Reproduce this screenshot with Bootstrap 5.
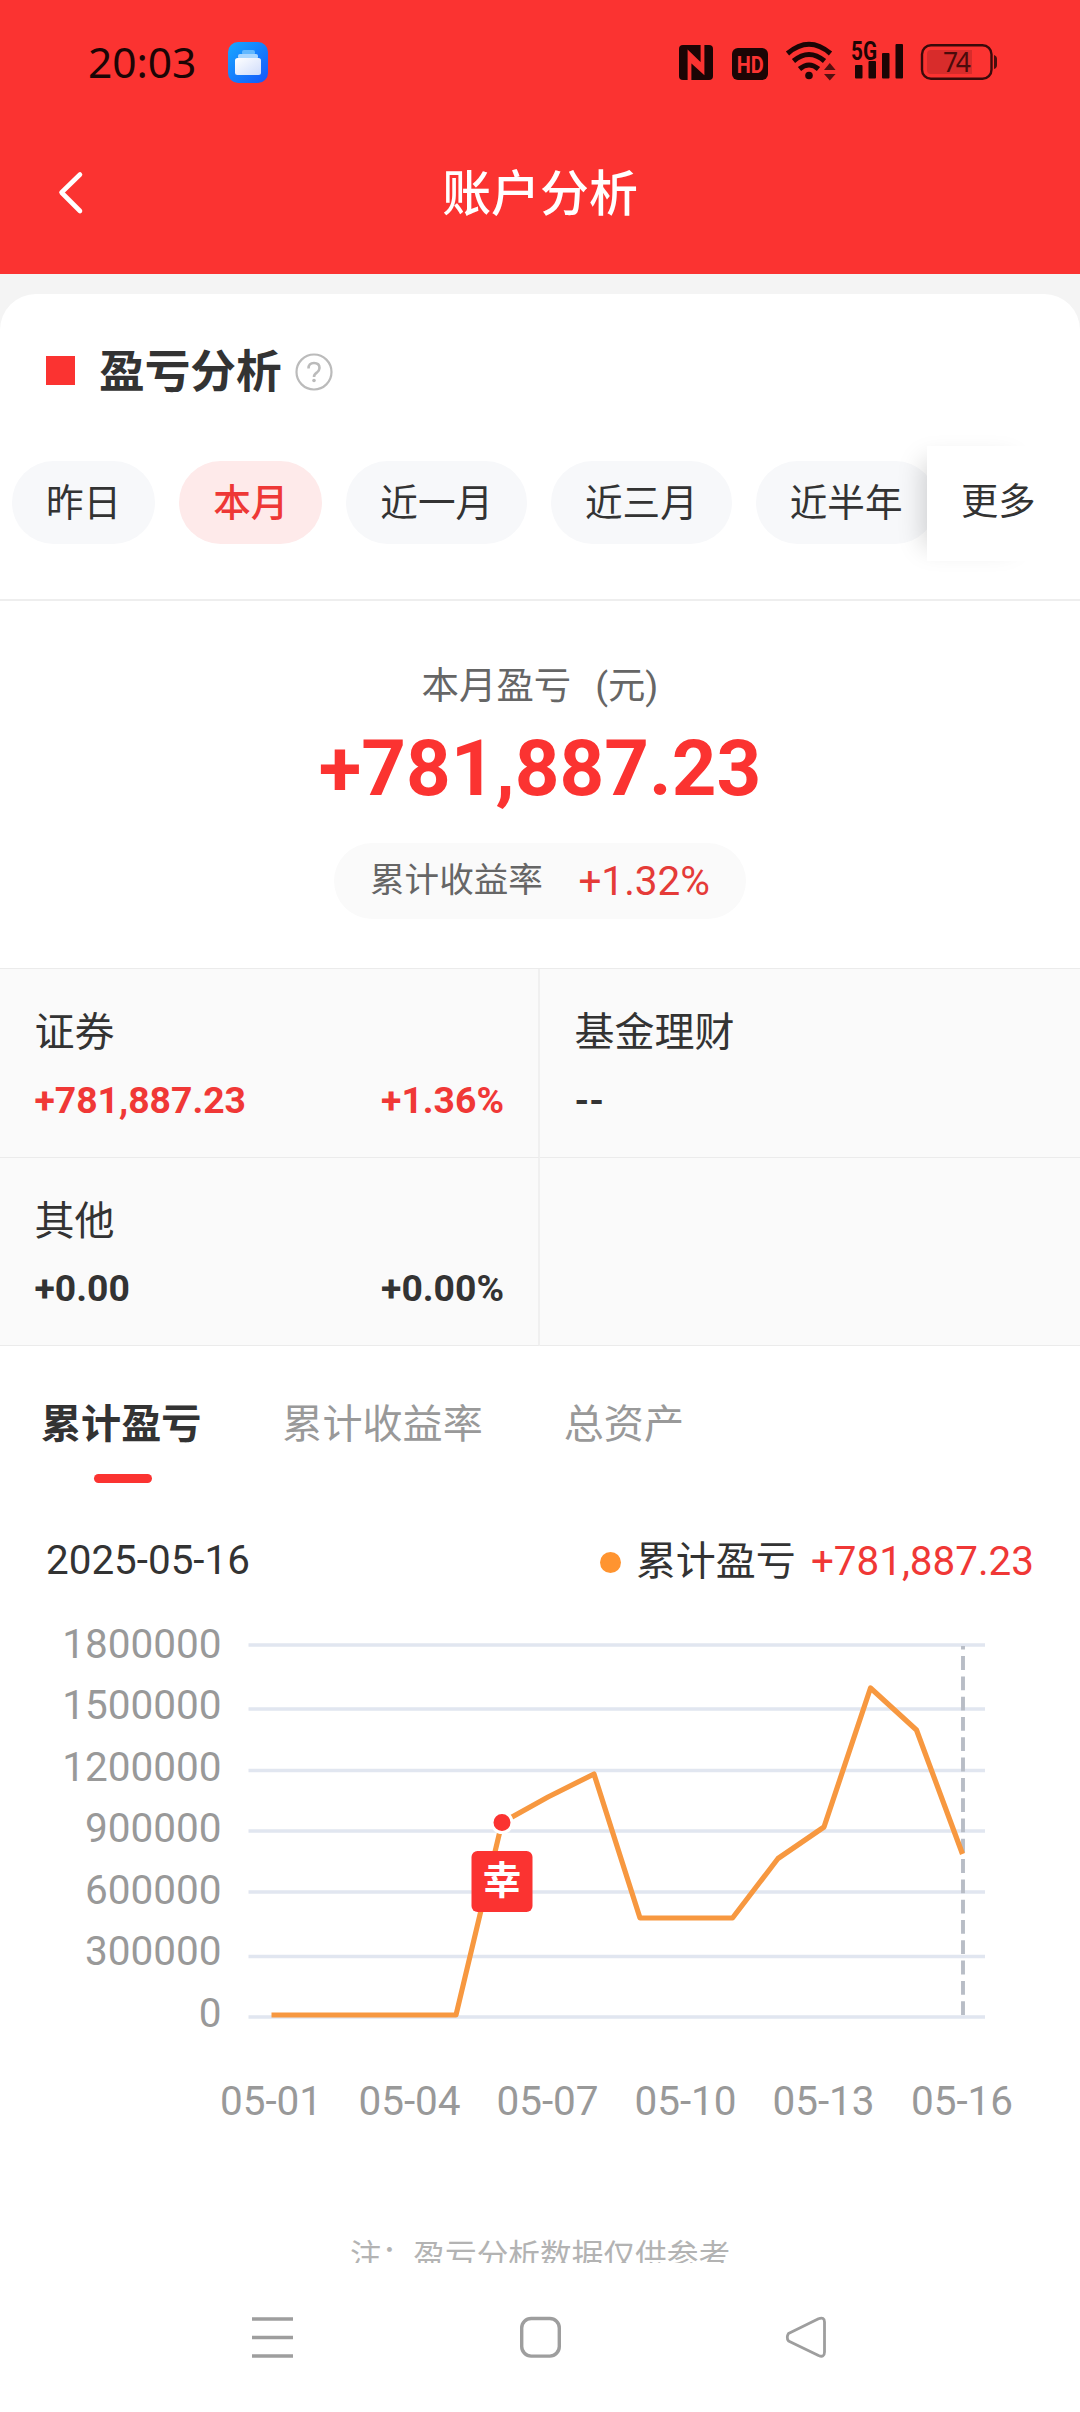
<!DOCTYPE html>
<html lang="zh-CN">
<head>
<meta charset="utf-8">
<meta name="viewport" content="width=device-width, initial-scale=1">
<title>账户分析</title>
<link href="https://cdn.jsdelivr.net/npm/bootstrap@5.3.0/dist/css/bootstrap.min.css" rel="stylesheet">
<style>
:root{--brand:#fb3331;--ink:#333;--sub:#666;--mute:#999}
body{font-family:Roboto,"Noto Sans CJK SC",sans-serif;color:var(--ink);background:#f4f4f4;height:2412px;overflow:hidden}
.screen{height:2412px;width:1080px}
.top-area{background:var(--brand);height:274px}
.status{height:124px;padding:0 81px 0 88px;color:#1c0505}
.clock{font-family:"Noto Sans",sans-serif;font-size:42.5px;line-height:50px;width:140px;letter-spacing:-.1px}
.title-bar{height:150px;padding-bottom:8px}
.title-bar .back{left:48px;top:38px}
.title-bar h1{font-size:48.9px;line-height:60px;font-weight:500;color:#fff;margin:0}
.sheet{margin-top:20px;border-radius:36px 36px 0 0;background:#fff;height:1969px;overflow:hidden}
.sec-head{height:167px;padding:0 46px;padding-top:2px}
.sec-head .sq{width:29px;height:29px;background:var(--brand);margin-top:-17px}
.sec-head h2{font-size:45.7px;line-height:60px;font-weight:700;margin:-11px 0 0 24px}
.sec-head svg{margin:-14px 0 0 13px}
.periods{height:140px;padding-left:12px;gap:24px;border-bottom:2px solid #eee;overflow:hidden}
.periods .chip{height:83px;border-radius:42px;background:#f7f8fa;padding:0 34px;font-size:37.6px;line-height:80px;white-space:nowrap;border:0;color:var(--ink);flex:none}
.periods .chip.active{background:#feeaea;color:#ee3836;font-weight:500}
.more{right:36px;top:-15px;width:117px;height:115px;background:#fff;font-size:37.3px;line-height:113px;padding-left:34px;box-shadow:-18px 0 24px -14px rgba(0,0,0,.17)}
.summary{height:367px;padding-top:57px}
.summary .cap{font-size:37.4px;line-height:56px;color:var(--sub);white-space:pre}
.summary .total{font-size:78px;line-height:90px;font-weight:700;color:var(--brand);margin-top:10px}
.summary .rate{height:76px;border-radius:38px;background:#fafafa;width:412px;margin-top:29px;color:var(--sub);font-size:34.6px;padding:0 36px 0}
.rate .num{font-size:40.5px;color:#e53b38}
.cells{--bs-gutter-x:0;background:#fafafa;border-top:1px solid #ebebeb}
.cells>.col-6{height:188.5px;border-bottom:1px solid #ebebeb;padding:37px 36px 0 34.5px}
.cells>.left-cell{border-right:2px solid #f0f0f0;padding-right:34px}
.cells .nm{font-size:40px;line-height:54px}
.cells .val{font-size:37.3px;line-height:44px;font-weight:700;margin-top:17.5px}
.up{color:#f03836}
.tabs-line{padding:52px 41px 0;gap:81px;font-size:40.1px;line-height:54px;color:var(--mute);height:139px}
.tabs-line .on{color:var(--ink);font-weight:700}
.tabs-line .bar{width:58px;height:9px;border-radius:4.5px;background:var(--brand);margin:22px auto 0;transform:translateX(2px)}
.legend-row{padding:0 46px;height:70px;font-size:40px;line-height:54px;margin-top:42px;margin-bottom:5px}
.legend-row .day{font-size:40.4px;margin-top:-3px}
.legend-row .num-l{margin-left:15px;font-size:40.4px}
.legend-row .dot{width:21px;height:21px;border-radius:50%;background:#ff9430;margin-right:15px}
.chart{display:block}
.foot-note{font-size:31.7px;line-height:44px;color:#b3b3b3;margin-top:103px}
.sysnav{height:149px;background:#fff}
</style>
</head>
<body>
<div class="screen d-flex flex-column">
  <header class="top-area flex-shrink-0">
    <div class="status d-flex align-items-center">
      <span class="clock">20:03</span>
      <svg width="40" height="41" viewBox="0 0 40 41"><defs><linearGradient id="ga" x1="0" y1="0" x2="1" y2="1"><stop offset="0" stop-color="#18a8ff"/><stop offset="1" stop-color="#1456fb"/></linearGradient><linearGradient id="gb" x1="0" y1="0" x2="1" y2="1"><stop offset="0" stop-color="#fff"/><stop offset="1" stop-color="#cfdcfb"/></linearGradient></defs><rect width="40" height="41" rx="10" fill="url(#ga)"/><rect x="14" y="8" width="13" height="5" rx="2" fill="#62b8ff"/><rect x="10" y="12" width="20" height="5" rx="2" fill="#a9d6ff"/><rect x="7" y="16" width="26" height="17" rx="2.500" fill="url(#gb)"/></svg>
      <svg class="ms-auto" width="322" height="60" viewBox="677 32 322 60" fill="#1c0505">
        <rect x="679" y="45" width="34" height="35" rx="4"/>
        <path d="M689.500 80V54l13 12.500M702.500 45v26L689.500 59" fill="none" stroke="#fb3331" stroke-width="3.800"/>
        <rect x="732" y="48" width="36" height="32" rx="6"/>
        <text x="750.300" y="72.500" text-anchor="middle" font-family="Roboto" font-weight="700" font-size="24.500" textLength="27" lengthAdjust="spacingAndGlyphs" fill="#fb3331">HD</text>
        <g fill="none" stroke="#1c0505" stroke-width="5"><path d="M787.500 53.500Q809 35 830.500 53.500"/><path d="M793.500 61Q809 48 824.500 61"/><path d="M799.500 69Q809 61 818.500 69"/></g>
        <circle cx="809" cy="75.500" r="3.800"/>
        <path d="M824 70l5.800-7 5.800 7zM824 74h11.600l-5.800 6.500z" opacity=".75"/>
        <text x="851" y="60" font-family="Roboto" font-weight="700" font-size="25" textLength="26" lengthAdjust="spacingAndGlyphs">5G</text>
        <rect x="855" y="65" width="7.500" height="13.500" rx="1"/><rect x="868.500" y="61" width="7.500" height="17.500" rx="1"/><rect x="882" y="53" width="7.500" height="25.500" rx="1"/><rect x="895.500" y="44" width="7.500" height="34.500" rx="1"/>
        <rect x="922" y="45.200" width="69.500" height="33.600" rx="9" fill="none" stroke="#3a0a0a" stroke-width="2.400"/>
        <path d="M931 50h41v24h-41q-4 0-4-4V54q0-4 4-4z" fill="#d82c2b"/>
        <path d="M994 55q3 1 3 4v6q0 3-3 4z" opacity=".8"/>
        <text x="957" y="72" text-anchor="middle" font-family="Noto Sans" font-size="26.500" textLength="28" fill="#4a0b0b">74</text>
      </svg>
    </div>
    <div class="title-bar position-relative d-flex align-items-center justify-content-center">
      <svg class="back position-absolute" width="44" height="60" viewBox="48 162 44 60"><path d="M80 174.500L61.500 192.500 80 211" fill="none" stroke="#fff" stroke-width="4.600" stroke-linecap="round" stroke-linejoin="round"/></svg>
      <h1>账户分析</h1>
    </div>
  </header>

  <main class="sheet flex-shrink-0">
    <div class="sec-head d-flex align-items-center">
      <span class="sq"></span><h2>盈亏分析</h2>
      <svg width="38" height="38" viewBox="0 0 38 38" fill="none" stroke="#bbb" stroke-width="2.200"><circle cx="19" cy="19" r="17.500"/><path d="M13.500 15.500q0-5.500 5.500-5.500t5.500 5q0 2.600-2.800 4.700Q19 21.500 19 24" stroke-width="2.600"/><circle cx="19" cy="27.500" r="1.800" fill="#bbb" stroke="none"/></svg>
    </div>
    <div class="position-relative">
      <div class="periods d-flex">
        <button class="chip">昨日</button><button class="chip active">本月</button><button class="chip">近一月</button><button class="chip">近三月</button><button class="chip">近半年</button>
      </div>
      <div class="more position-absolute">更多</div>
    </div>
    <section class="summary d-flex flex-column align-items-center">
      <div class="cap">本月盈亏<span class="ms-4"></span>(元)</div>
      <div class="total">+781,887.23</div>
      <div class="rate d-flex align-items-center justify-content-between"><span>累计收益率</span><span class="num">+1.32%</span></div>
    </section>
    <section class="row cells">
      <div class="col-6 left-cell"><div class="nm">证券</div><div class="val up d-flex justify-content-between"><span>+781,887.23</span><span>+1.36%</span></div></div>
      <div class="col-6"><div class="nm">基金理财</div><div class="val">--</div></div>
      <div class="col-6 left-cell"><div class="nm">其他</div><div class="val d-flex justify-content-between"><span>+0.00</span><span>+0.00%</span></div></div>
      <div class="col-6"></div>
    </section>
    <nav class="tabs-line d-flex">
      <div class="on">累计盈亏<div class="bar"></div></div><div>累计收益率</div><div>总资产</div>
    </nav>
    <div class="legend-row d-flex align-items-center">
      <span class="day me-auto">2025-05-16</span><span class="dot"></span><span>累计盈亏</span><span class="num-l up">+781,887.23</span>
    </div>
    <svg class="chart" width="1080" height="530" viewBox="0 1602 1080 530" font-family="Roboto, sans-serif" font-size="40.500">
      <path d="M248.500 1645H985M248.500 1709H985M248.500 1770.500H985M248.500 1831H985M248.500 1892H985M248.500 1956.500H985M248.500 2017H985" stroke="#e1e6f0" stroke-width="3.700"/>
      <path d="M963 2015V1646" stroke="#b8bdc6" stroke-width="3.900" stroke-dasharray="13.800 6.500"/>
      <polyline points="271.500,2015 456,2015 502,1822.500 548,1797 594,1774 640,1918 732.500,1918 778,1858.500 824,1827 870.500,1688 916.500,1730 962.500,1854" fill="none" stroke="#f79840" stroke-width="5.200" stroke-linejoin="round"/>
      <circle cx="502" cy="1822.500" r="10" fill="#fb3331" stroke="#fff" stroke-width="3"/>
      <rect x="471.500" y="1851" width="61" height="61" rx="6" fill="#fb3331"/>
      <text x="502" y="1894" text-anchor="middle" font-family="Noto Sans CJK SC, sans-serif" font-weight="700" font-size="38.500" fill="#fff">幸</text>
      <g fill="#999" text-anchor="end"><text x="221.500" y="1657.500">1800000</text><text x="221.500" y="1719">1500000</text><text x="221.500" y="1781">1200000</text><text x="221.500" y="1842">900000</text><text x="221.500" y="1904">600000</text><text x="221.500" y="1965">300000</text><text x="221.500" y="2027">0</text></g>
      <g fill="#999" text-anchor="middle"><text x="271" y="2115">05-01</text><text x="409.500" y="2115">05-04</text><text x="547.500" y="2115">05-07</text><text x="685.500" y="2115">05-10</text><text x="823.500" y="2115">05-13</text><text x="962" y="2115">05-16</text></g>
    </svg>
    <div class="foot-note text-center">注：盈亏分析数据仅供参考</div>
  </main>
  <footer class="sysnav flex-shrink-0">
    <svg width="1080" height="149" viewBox="0 2263 1080 149" fill="none" stroke="#9e9e9e" stroke-width="3.400"><path d="M252 2319h41M252 2337.500h41M252 2356h41"/><rect x="521.700" y="2318.500" width="37.600" height="37.600" rx="9.500"/><path d="M788.500 2333.500L818.500 2318.700Q824.500 2316.500 824.500 2322V2352Q824.500 2358 818.500 2355.500L788.500 2341Q786 2337.500 788.500 2333.500z" stroke-width="2.800" stroke-linejoin="round"/></svg>
  </footer>
</div>
<script src="https://cdn.jsdelivr.net/npm/bootstrap@5.3.0/dist/js/bootstrap.bundle.min.js"></script>
</body>
</html>
